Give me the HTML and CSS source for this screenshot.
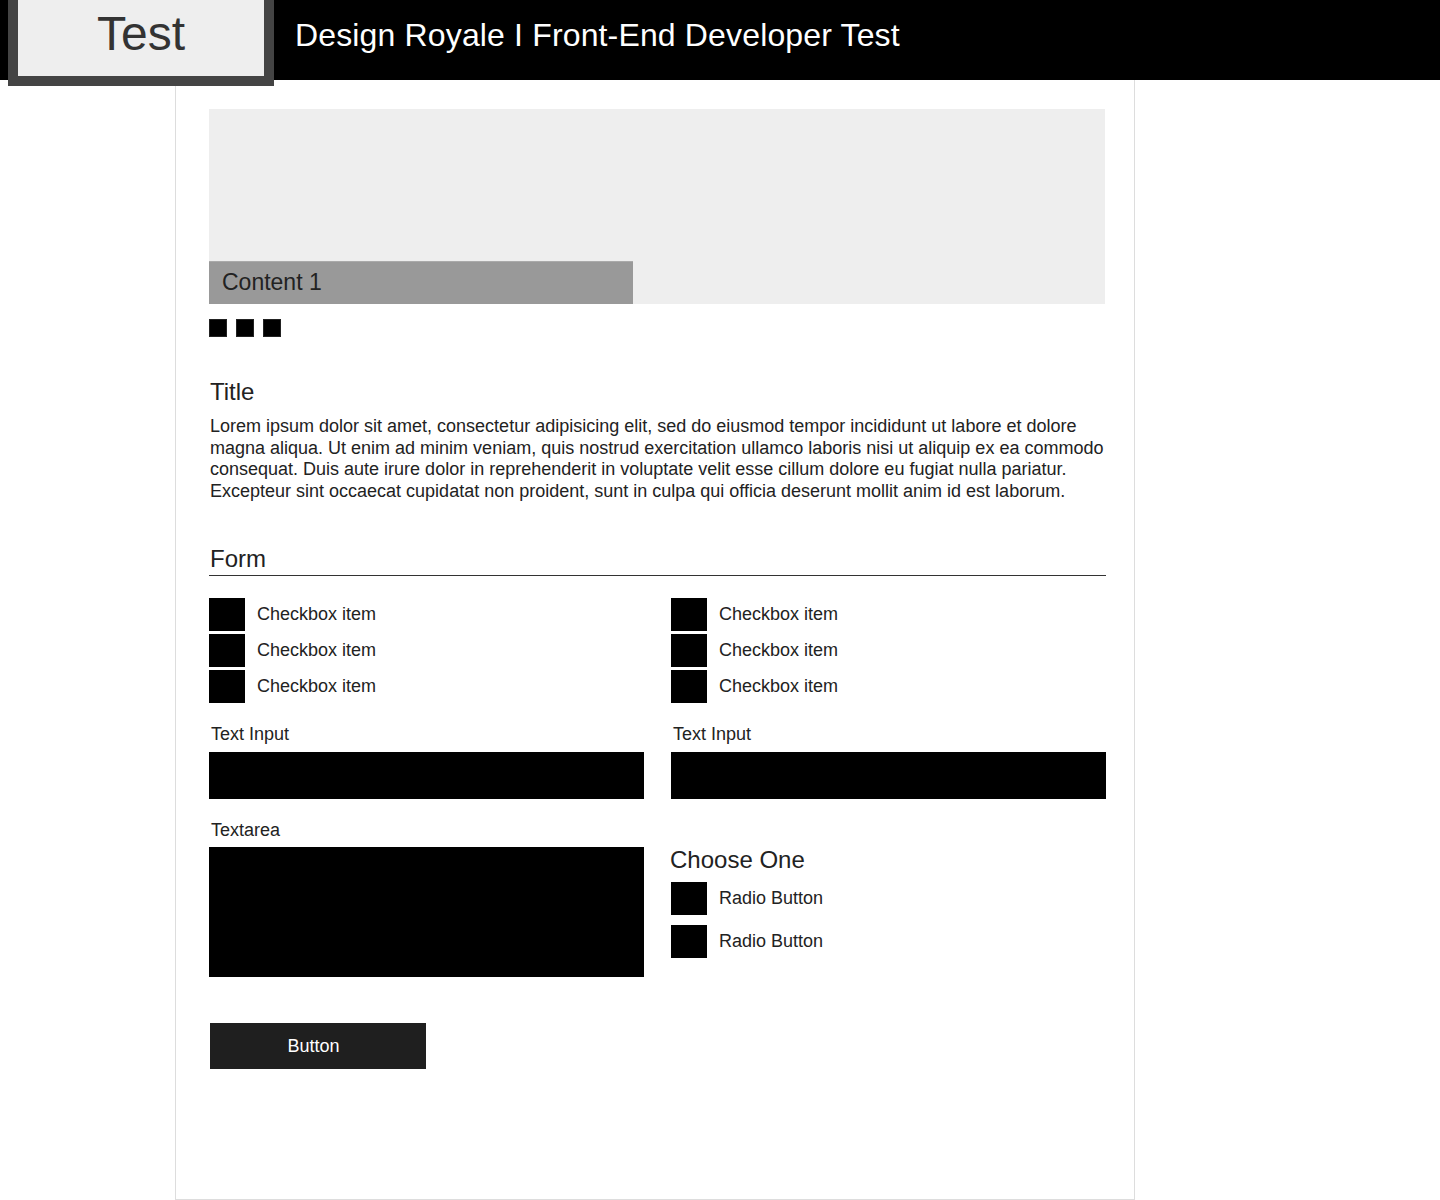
FILE: index.html
```html
<!DOCTYPE html>
<html lang="en">
<head>
<meta charset="utf-8">
<title>Design Royale I Front-End Developer Test</title>
<link rel="stylesheet" href="styles.css">
</head>
<body>
<header class="site-header">
  <div class="logo">Test</div>
  <h1 class="site-title">Design Royale I Front-End Developer Test</h1>
</header>
<main class="page">
  <section class="slider">
    <div class="slide">
      <div class="caption">Content 1</div>
    </div>
    <div class="dots"><span class="dot"></span><span class="dot"></span><span class="dot"></span></div>
  </section>

  <section class="intro">
    <h2 class="intro-title">Title</h2>
    <p class="intro-text">Lorem ipsum dolor sit amet, consectetur adipisicing elit, sed do eiusmod tempor incididunt ut labore et dolore magna aliqua. Ut enim ad minim veniam, quis nostrud exercitation ullamco laboris nisi ut aliquip ex ea commodo consequat. Duis aute irure dolor in reprehenderit in voluptate velit esse cillum dolore eu fugiat nulla pariatur. Excepteur sint occaecat cupidatat non proident, sunt in culpa qui officia deserunt mollit anim id est laborum.</p>
  </section>

  <form class="form">
    <h2 class="form-title">Form</h2>
    <div class="form-grid">
      <div class="checks">
        <div class="check"><span class="box"></span><span class="check-label">Checkbox item</span></div>
        <div class="check"><span class="box"></span><span class="check-label">Checkbox item</span></div>
        <div class="check"><span class="box"></span><span class="check-label">Checkbox item</span></div>
      </div>
      <div class="checks">
        <div class="check"><span class="box"></span><span class="check-label">Checkbox item</span></div>
        <div class="check"><span class="box"></span><span class="check-label">Checkbox item</span></div>
        <div class="check"><span class="box"></span><span class="check-label">Checkbox item</span></div>
      </div>
      <div class="field">
        <div class="field-label">Text Input</div>
        <div class="input"></div>
      </div>
      <div class="field">
        <div class="field-label">Text Input</div>
        <div class="input"></div>
      </div>
      <div class="field">
        <div class="field-label">Textarea</div>
        <div class="textarea"></div>
      </div>
      <div class="choose">
        <h3 class="choose-title">Choose One</h3>
        <div class="radios">
          <div class="check"><span class="box"></span><span class="check-label">Radio Button</span></div>
          <div class="check"><span class="box"></span><span class="check-label">Radio Button</span></div>
        </div>
      </div>
    </div>
    <div class="button">Button</div>
  </form>
</main>
</body>
</html>
```

FILE: styles.css
```css
* { box-sizing: border-box; }

html, body {
  margin: 0;
  padding: 0;
  background: #fff;
  font-family: "Liberation Sans", Arial, Helvetica, sans-serif;
  color: #222;
}

.site-header {
  height: 80px;
  background: #000;
  display: flex;
  align-items: flex-start;
}

.logo {
  margin-left: 8px;
  width: 266px;
  height: 86px;
  flex: none;
  background: #eee;
  border: 10px solid #444;
  border-top: 0;
  color: #333;
  font-size: 48px;
  line-height: 68px;
  text-align: center;
  position: relative;
  z-index: 2;
}

.site-title {
  margin: 0 0 0 21px;
  font-size: 32px;
  font-weight: normal;
  line-height: 70px;
  letter-spacing: 0.15px;
  color: #fff;
}

.page {
  width: 960px;
  min-height: 1120px;
  margin-left: 175px;
  border: 1px solid #ddd;
  border-top: 0;
  padding: 29px 29px 0 33px;
}

.slide {
  height: 195px;
  background: #eee;
  display: flex;
  align-items: flex-end;
}

.caption {
  width: 424px;
  height: 43px;
  background: #999;
  border-top: 1px solid #aaa;
  font-size: 23px;
  line-height: 41px;
  padding-left: 13px;
  color: #222;
}

.dots {
  display: flex;
  gap: 9px;
  margin-top: 15px;
}

.dot {
  width: 18px;
  height: 18px;
  background: #000;
  box-shadow: inset 0 0 0 1px #222;
}

.intro {
  margin-top: 41px;
  padding-left: 1px;
}

.intro-title {
  margin: 0;
  font-size: 24px;
  font-weight: normal;
  line-height: 28px;
}

.intro-text {
  margin: 10px 0 0;
  font-size: 18px;
  line-height: 21.6px;
}

.form {
  margin-top: 43px;
  margin-right: -1px;
}

.form-title {
  margin: 0;
  padding: 0 0 2px 1px;
  font-size: 24px;
  font-weight: normal;
  line-height: 28px;
  border-bottom: 1px solid #333;
}

.form-grid {
  margin-top: 22px;
  display: grid;
  grid-template-columns: 435px 435px;
  column-gap: 27px;
  row-gap: 18px;
}

.checks {
  display: flex;
  flex-direction: column;
  gap: 3px;
}

.check {
  display: flex;
  align-items: center;
  gap: 12px;
  font-size: 18px;
}

.box {
  width: 36px;
  height: 33px;
  background: #000;
  flex: none;
}

.field-label {
  font-size: 18px;
  line-height: 21.6px;
  padding: 3px 0 0 2px;
}

.input {
  margin-top: 6px;
  height: 47px;
  background: #000;
}

.textarea {
  margin-top: 5px;
  height: 130px;
  background: #000;
}

.choose-title {
  margin: 29px 0 0 -1px;
  font-size: 24px;
  font-weight: normal;
  line-height: 28px;
}

.radios {
  margin-top: 8px;
  display: flex;
  flex-direction: column;
  gap: 10px;
}

.button {
  margin: 46px 0 0 1px;
  width: 216px;
  height: 46px;
  background: #1f1f1f;
  color: #fff;
  font-size: 18px;
  line-height: 46px;
  text-align: center;
  padding-right: 9px;
}
```
